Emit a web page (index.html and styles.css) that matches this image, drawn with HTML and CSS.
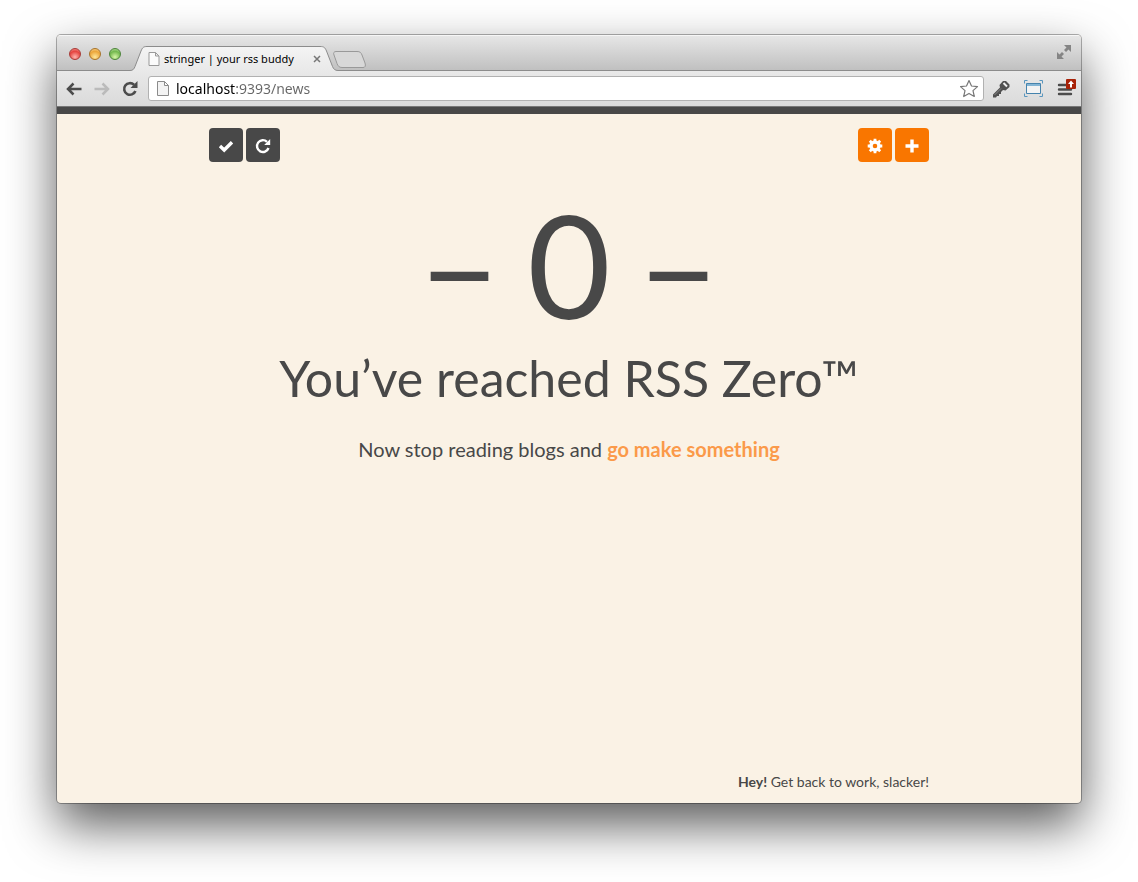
FILE: index.html
```html
<!DOCTYPE html>
<html lang="en">
<head>
<meta charset="utf-8">
<title>stringer | your rss buddy</title>
<link rel="stylesheet" href="styles.css">
</head>
<body>
<div class="window">
  <header class="tabstrip">
    <div class="lights">
      <button class="light red" aria-label="Close window"></button>
      <button class="light amber" aria-label="Minimize window"></button>
      <button class="light green" aria-label="Zoom window"></button>
    </div>
    <div class="tab">
      <svg class="tab-shape" viewBox="0 0 208 25" aria-hidden="true">
        <defs><linearGradient id="tabfill" x2="0" y2="1"><stop stop-color="#f4f4f4"/><stop offset="1" stop-color="#e9e9e9"/></linearGradient></defs>
        <path d="M0 25V24.500C3 24.500 4 23 5 20.500L11 5C12.500 1.500 13.500 .5 17 .5H190C194 .5 195 1.500 196.500 5L202.500 20.500C203.500 23 205 24.500 208 24.500V25Z" fill="url(#tabfill)"/>
        <path d="M0 24.500C3 24.500 4 23 5 20.500L11 5C12.500 1.500 13.500 .5 17 .5H190C194 .5 195 1.500 196.500 5L202.500 20.500C203.500 23 205 24.500 208 24.500" fill="none" stroke="#8c8c8c"/>
      </svg>
      <svg class="page-icon" width="12" height="14" viewBox="0 0 12 14" aria-hidden="true"><path d="M1 .5H7.500L11 4V13.500H1ZM7.500 .5V4H11" fill="#fbfbfb" stroke="#999"/></svg>
      <span class="tab-title">stringer | your rss buddy</span>
      <button class="tab-close" aria-label="Close tab"><svg width="8" height="8" viewBox="0 0 8 8"><path d="M1 1L7 7M7 1L1 7" stroke="#777" stroke-width="1.500"/></svg></button>
    </div>
    <button class="new-tab" aria-label="New tab"><svg width="33" height="17" viewBox="0 0 33 17"><path d="M3 .5H24C27 .5 28 1.500 29 4L32 12C33 15 32 16.500 30 16.500H9C6 16.500 5 15 4 12.500L1 4C0 2 1 .5 3 .5Z" fill="#d8d8d8" stroke="#999"/></svg></button>
    <button class="expand" aria-label="Full screen"><svg width="14" height="14" viewBox="0 0 14 14"><path d="M7 0H14V7L11.500 4.500L9 7L7 5L9.500 2.500ZM0 7L2.500 9.500L5 7L7 9L4.500 11.500L7 14H0Z" fill="#858585"/></svg></button>
  </header>
  <nav class="toolbar">
    <button aria-label="Back"><svg width="16" height="14" viewBox="0 0 16 14"><path d="M7.500 1.500L2 7L7.500 12.500M2.500 7H15.500" fill="none" stroke="#4c4c4c" stroke-width="2.500"/></svg></button>
    <button aria-label="Forward"><svg width="16" height="14" viewBox="0 0 16 14"><path d="M8.500 1.500L14 7L8.500 12.500M.5 7H13.500" fill="none" stroke="#bbb" stroke-width="2.500"/></svg></button>
    <button aria-label="Reload"><svg width="16" height="16" viewBox="0 0 16 16"><path d="M12 3.800A5.800 5.800 0 1 0 13.400 10" fill="none" stroke="#4c4c4c" stroke-width="2.600"/><path d="M15.500 0V7H8.500Z" fill="#4c4c4c"/></svg></button>
    <div class="address">
      <svg width="12" height="15" viewBox="0 0 12 15" aria-hidden="true"><path d="M.5 .5H7.500L11.500 4.500V14.500H.5ZM7.500 .5V4.500H11.500" fill="#f3f3f3" stroke="#8b8b8b"/></svg>
      <input class="url" type="text" aria-label="Address" value="localhost:9393/news">
      <button aria-label="Bookmark"><svg width="20" height="19" viewBox="0 0 20 19"><path d="M10 1.500L12.500 7L18.500 7.600L14 11.600L15.300 17.500L10 14.400L4.700 17.500L6 11.600L1.500 7.600L7.500 7Z" fill="#fff" stroke="#777" stroke-width="1.200" stroke-linejoin="round"/></svg></button>
    </div>
    <div class="extensions">
      <button aria-label="Developer key"><svg width="18" height="18" viewBox="0 0 18 18"><path d="M1 14.500L8 7.500L7.500 5L11 1H14L17.500 4.500V7L13.500 10.500L11 10L9 12V14H7V16H5L4 17.500H1Z" fill="#505050"/><path d="M11.500 3L15 6.500" stroke="#eee" stroke-width="2"/><path d="M2.500 15L9 8.500" stroke="#888"/></svg></button>
      <button aria-label="Capture window"><svg width="19" height="17" viewBox="0 0 19 17"><path d="M.5 3.500V.5H3.500M15.500 .5H18.500V3.500M.5 13.500V16.500H3.500M15.500 16.500H18.500V13.500" fill="none" stroke="#5896bf"/><path d="M2.500 3.500H16.500V13.500H2.500Z" fill="#f3f3f3" stroke="#4583ad"/><path d="M3 4H16V6H3Z" fill="#83b5d5"/></svg></button>
      <button aria-label="Menu"><svg width="19" height="20" viewBox="0 0 19 20"><path d="M2 6H12M2 10.500H14M2 15H14" stroke="#4c4c4c" stroke-width="2.400" stroke-linecap="round"/><rect x="9" y="0" width="10" height="10" rx="1" fill="#a82208"/><path d="M14 1.500L17 5H15V8.500H13V5H11Z" fill="#fff"/></svg></button>
    </div>
  </nav>
  <main class="page">
    <div class="container">
      <div class="actions">
        <div class="group">
          <button class="btn dark" aria-label="Mark all as read"><svg width="16" height="14" viewBox="0 0 16 14"><path d="M2 7L6.200 11L14 3.200" fill="none" stroke="#fff" stroke-width="3.400"/></svg></button>
          <button class="btn dark" aria-label="Refresh"><svg width="16" height="16" viewBox="0 0 16 16"><path d="M12 3.800A5.900 5.900 0 1 0 13.500 10" fill="none" stroke="#fff" stroke-width="2.400"/><path d="M15.200 1V7H9.200Z" fill="#fff"/></svg></button>
        </div>
        <div class="group">
          <button class="btn orange" aria-label="Settings"><svg width="16" height="16" viewBox="0 0 16 16"><circle cx="8" cy="8" r="4" fill="none" stroke="#fff" stroke-width="3.400"/><path d="M8 .7V3M8 13V15.300M.7 8H3M13 8H15.300M2.800 2.800L4.500 4.500M11.500 11.500L13.200 13.200M2.800 13.200L4.500 11.500M11.500 4.500L13.200 2.800" stroke="#fff" stroke-width="2.800"/></svg></button>
          <button class="btn orange" aria-label="Add feed"><svg width="14" height="14" viewBox="0 0 14 14"><path d="M7 .5V13.500M.5 7H13.500" stroke="#fff" stroke-width="3.400"/></svg></button>
        </div>
      </div>
      <section class="zero">
        <p class="count"><span>–</span> <span>0</span> <span>–</span></p>
        <h1>You’ve reached RSS Zero™</h1>
        <p class="hint">Now stop reading blogs and <a href="#">go make something</a></p>
      </section>
      <footer><strong>Hey!</strong> Get back to work, slacker!</footer>
    </div>
  </main>
</div>
</body>
</html>
```
FILE: styles.css
```css
* { box-sizing: border-box; }
body {
  margin: 0;
  min-height: 100vh;
  padding: 35px 57px 79px;
  display: flex;
  background: #fff;
  font-family: Lato, sans-serif;
  color: #484848;
}
button {
  display: flex;
  align-items: center;
  justify-content: center;
  padding: 0;
  border: 0;
  background: none;
}
svg { display: block; flex: none; }
p, h1 { margin: 0; font-weight: 400; }

.window {
  flex: 1;
  display: flex;
  flex-direction: column;
  border-radius: 4px;
  overflow: hidden;
  background: #faf2e5;
  box-shadow: 0 0 0 1px rgba(0, 0, 0, .3), 0 22px 50px rgba(0, 0, 0, .65);
}
.tabstrip {
  display: flex;
  align-items: flex-end;
  height: 36px;
  padding: 0 10px 0 12px;
  border-top: 1px solid #f6f6f6;
  background: linear-gradient(#e6e6e6, #bfbfbf);
  box-shadow: inset 0 -1px #8c8c8c;
}
.lights { display: flex; gap: 8px; margin-bottom: 11px; }
.light { width: 12px; height: 12px; border-radius: 50%; border: 1px solid; }
.red { background: radial-gradient(circle at 50% 80%, #ffb5ae, #e5443f 60%, #f9a09b); border-color: #a83a36; }
.amber { background: radial-gradient(circle at 50% 80%, #ffe79a, #eca63a 60%, #fbdca0); border-color: #a87328; }
.green { background: radial-gradient(circle at 50% 80%, #d8f7a8, #73b84e 60%, #c4e7ac); border-color: #4c8439; }
.tab {
  position: relative;
  display: flex;
  align-items: center;
  width: 208px;
  height: 25px;
  margin-left: 9px;
  padding: 0 17px 0 18px;
  color: #000;
  font: 11px/16px "Noto Sans", sans-serif;
}
.tab-shape { position: absolute; inset: 0; width: 100%; height: 100%; }
.page-icon, .tab-title, .tab-close { position: relative; }
.tab-title { margin-left: 4px; flex: 1; white-space: nowrap; }
.tab-close { width: 8px; height: 16px; }
.new-tab { margin-bottom: 3px; margin-left: -5px; }
.expand { margin: 0 0 12px auto; }

.toolbar {
  display: flex;
  align-items: center;
  gap: 12px;
  height: 36px;
  padding: 0 5px 0 9px;
  background: linear-gradient(#e9e9e9, #dadada);
  border-bottom: 1px solid #777;
}
.extensions { display: flex; align-items: center; gap: 14px; }
.address {
  flex: 1;
  display: flex;
  align-items: center;
  gap: 7px;
  height: 25px;
  margin-left: -2px;
  margin-right: -4px;
  padding: 0 4px 0 8px;
  border: 1px solid #b1b1b1;
  border-radius: 3px;
  background: #fff;
}
.url {
  flex: 1;
  min-width: 0;
  padding: 0;
  border: 0;
  outline: 0;
  font: 14px/20px "Noto Sans", sans-serif;
  color: transparent;
  background: linear-gradient(90deg, #000 60px, #666 60px) text;
  -webkit-background-clip: text;
}

.page {
  flex: 1;
  display: flex;
  justify-content: center;
  border-top: 7px solid #484848;
}
.container {
  flex: 1;
  display: flex;
  flex-direction: column;
  max-width: 720px;
  padding: 14px 0 11px;
}
.actions { display: flex; justify-content: space-between; }
.group { display: flex; gap: 3px; }
.btn { width: 34px; height: 34px; padding-top: 1px; border-radius: 4px; }
.dark { background: #484848; }
.orange { background: #f97600; }
.zero { text-align: center; padding-top: 15px; }
.count { display: flex; justify-content: center; gap: 26px; font-size: 144px; line-height: 174px; }
h1 { font-size: 50px; line-height: 54px; }
.hint { margin-top: 30px; font-size: 20px; line-height: 28px; }
.hint a { color: #fb9a4a; font-weight: 700; text-decoration: none; }
footer { margin-top: auto; text-align: right; font-size: 14px; line-height: 20px; }
```
